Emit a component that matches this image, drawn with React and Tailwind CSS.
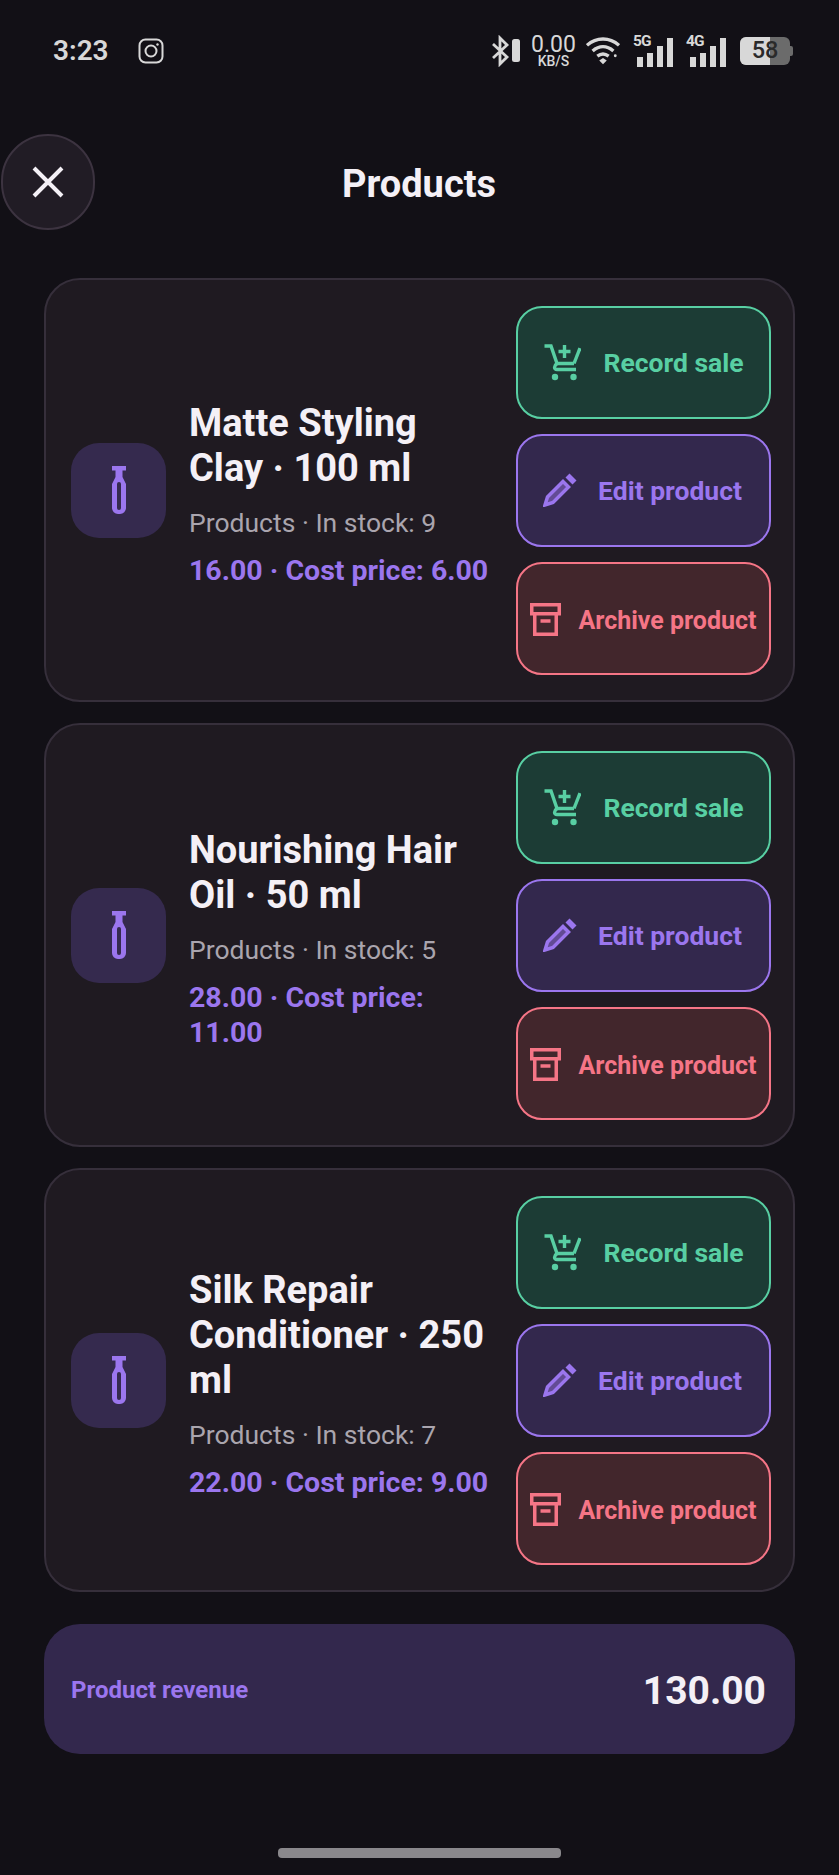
import React from "react";

const ROBOTO = { fontFamily: "Roboto, sans-serif" };

const products = [
  { id: 1, name: "Matte Styling Clay · 100 ml", stock: 9, price: "16.00 · Cost price: 6.00" },
  { id: 2, name: "Nourishing Hair Oil · 50 ml", stock: 5, price: "28.00 · Cost price: 11.00" },
  { id: 3, name: "Silk Repair Conditioner · 250 ml", stock: 7, price: "22.00 · Cost price: 9.00" },
];

const CartIcon = () => (
  <svg width="38" height="38" viewBox="12 8 38 38" fill="none" stroke="currentColor" strokeWidth="3.4">
    <path d="M13.5 11H20l6 17.5h17" />
    <path d="M49 13l-6 15.5" />
    <path d="M26 28.5c-3 2-3.5 6 0 6h19" />
    <path d="M33.5 10v13M27.5 16.5h12" />
    <circle cx="24" cy="42" r="3.2" fill="currentColor" stroke="none" />
    <circle cx="42.5" cy="42" r="3.2" fill="currentColor" stroke="none" />
  </svg>
);

const PenIcon = () => (
  <svg width="34" height="34" viewBox="0 0 34 34" fill="none" stroke="currentColor" strokeWidth="3.5">
    <path d="M2 32l2.5-8L20 8.5l5.5 5.5L10 29.5z" fill="currentColor" fillOpacity="0.45" />
    <path d="M26.5 0.5l7 7-4 4-7-7z" fill="currentColor" stroke="none" />
  </svg>
);

const BoxIcon = () => (
  <svg width="31" height="33" viewBox="0 0 31 33" fill="none" stroke="currentColor" strokeWidth="3.5">
    <path d="M1.75 1.75h27.5v9H1.75z" />
    <path d="M4.75 11v20.25h21.5V11" />
    <path d="M10.5 18h10" />
  </svg>
);

const BottleIcon = () => (
  <svg width="14" height="48" viewBox="0 0 14 48" fill="none">
    <path d="M0 0h14v4.5h-3.5V11l3.5 7v24a6 6 0 0 1-6 6H6a6 6 0 0 1-6-6V18l3.5-7V4.5H0z" fill="#9b76ee" />
    <rect x="5" y="16" width="4" height="28" rx="2" fill="#352a4e" />
  </svg>
);

const Signal = ({ label }) => (
  <div className="relative h-[32px] w-[40px]">
    <span className="absolute left-0 top-[-1px] text-[15.5px] font-bold leading-[14px] tracking-[-1px] text-[#d8d8d8]" style={ROBOTO}>{label}</span>
    <div className="absolute bottom-0 right-0 flex items-end gap-[4px]">
      <div className="h-[10px] w-[6px] bg-[#d8d8d8]" />
      <div className="h-[14px] w-[6px] bg-[#d8d8d8]" />
      <div className="h-[21px] w-[6px] bg-[#d8d8d8]" />
      <div className="h-[29px] w-[6px] bg-[#d8d8d8]" />
    </div>
  </div>
);

const StatusBar = () => (
  <div className="flex h-[100px] items-center justify-between pl-[53px] pr-[46px] pt-[2px] text-[#d8d8d8]" style={ROBOTO}>
    <div className="flex items-center gap-[29px]">
      <span className="text-[28px] font-semibold leading-none">3:23</span>
      <svg width="26" height="26" viewBox="0 0 26 26" fill="none" stroke="currentColor" strokeWidth="2">
        <rect x="1.5" y="1.5" width="23" height="23" rx="6" />
        <circle cx="13" cy="13" r="5.5" />
        <circle cx="19.5" cy="6.5" r="1.2" fill="currentColor" stroke="none" />
      </svg>
    </div>
    <div className="flex items-center">
      <svg width="28" height="32" viewBox="0 0 28 32" fill="none" className="mr-[11px]">
        <path d="M1 9l14 13-7 7V3l7 7L1 23" stroke="currentColor" strokeWidth="2.8" />
        <rect x="20" y="4" width="8" height="23" rx="2.5" fill="currentColor" />
      </svg>
      <div className="mr-[10px] flex w-[45px] flex-col items-center">
        <span className="text-[23px] leading-[18px]">0.00</span>
        <span className="mt-[1px] text-[14px] font-medium leading-[12px]">KB/S</span>
      </div>
      <svg width="34" height="30" viewBox="0 0 36 30" fill="none" stroke="currentColor" strokeWidth="3.6" className="mr-[13px]">
        <path d="M1 9c10-9 24-9 34 0" />
        <path d="M7 15c7-6 15-6 22 0" />
        <path d="M12 20.5c4-3 8-3 12 0" />
        <path d="M14 25l4-2.5 4 2.5-4 4z" fill="currentColor" stroke="none" />
        <circle cx="31" cy="20" r="1.5" fill="currentColor" stroke="none" />
      </svg>
      <div className="mr-[13px]"><Signal label="5G" /></div>
      <div className="mr-[14px]"><Signal label="4G" /></div>
      <div className="relative flex h-[28px] w-[50px] items-center overflow-hidden rounded-[6px] bg-[#6b6b6b]">
        <div className="absolute inset-y-0 left-0 w-[30px] bg-[#d8d8d8]" />
        <span className="relative w-full text-center text-[23.5px] font-medium leading-none text-[#2a2a2a]">58</span>
      </div>
      <div className="h-[10px] w-[3px] rounded-r-[2px] bg-[#6b6b6b]" />
    </div>
  </div>
);

const ActionButton = ({ icon, label, tone, gap }) => (
  <button type="button" className={`flex h-[113px] w-full items-center justify-center rounded-[26px] border-2 font-bold ${tone} ${gap}`}>
    {icon}
    <span className="whitespace-nowrap pt-[2px]">{label}</span>
  </button>
);

const ProductCard = ({ product }) => (
  <div className="flex h-[424px] items-center rounded-[36px] border-2 border-[#362f3b] bg-[#1f1a21] pl-[25px] pr-[22px]">
    <div className="flex h-[95px] w-[95px] shrink-0 items-center justify-center rounded-[28px] bg-[#352a4e]">
      <BottleIcon />
    </div>
    <div className="ml-[23px] w-[309px] shrink-0 pt-[8px]">
      <h2 className="text-[38px] font-bold leading-[45px] text-[#f4f0f6]">{product.name}</h2>
      <p className="mt-[14px] text-[26.5px] leading-[36px] text-[#aaa5ae]">Products · In stock: {product.stock}</p>
      <p className="mt-[12px] text-[28.5px] font-bold leading-[35px] text-[#9b76ee]">{product.price}</p>
    </div>
    <div className="ml-auto flex w-[255px] shrink-0 flex-col gap-[15px]">
      <ActionButton icon={<CartIcon />} label="Record sale" gap="gap-[22px] text-[26.5px]" tone="border-[#58cfa3] bg-[#1c3c35] text-[#58cfa3]" />
      <ActionButton icon={<PenIcon />} label="Edit product" gap="gap-[21px] pr-[2px] text-[26.5px]" tone="border-[#9b76ee] bg-[#33284d] text-[#9b76ee]" />
      <ActionButton icon={<BoxIcon />} label="Archive product" gap="gap-[17px] pt-[3px] text-[25px]" tone="border-[#f57586] bg-[#42262c] text-[#f57586]" />
    </div>
  </div>
);

export default function App() {
  return (
    <div className="flex min-h-[1875px] w-[839px] flex-col bg-[#121016]" style={ROBOTO}>
      <StatusBar />
      <div className="mt-[34px] grid grid-cols-[1fr_auto_1fr] items-center pl-[1px]">
        <button type="button" className="flex h-[96px] w-[94px] items-center justify-center rounded-full border-2 border-[#3c3340] bg-[#211c25] text-[#f4f0f6]">
          <svg width="34" height="34" viewBox="0 0 34 34" fill="none" stroke="currentColor" strokeWidth="4">
            <path d="M3 3l28 28M31 3L3 31" />
          </svg>
        </button>
        <h1 className="mr-[2px] pt-[4px] text-[38px] font-bold leading-none text-[#f4f0f6]">Products</h1>
        <div />
      </div>
      <div className="mt-[48px] flex flex-col gap-[21px] px-[44px]">
        {products.map((p) => (
          <ProductCard key={p.id} product={p} />
        ))}
      </div>
      <div className="mx-[44px] mt-[32px] flex h-[130px] items-center justify-between rounded-[36px] bg-[#33284d] pl-[27px] pr-[29px] pt-[2px]">
        <span className="text-[24px] font-bold text-[#9b76ee]">Product revenue</span>
        <span className="pt-[2px] text-[39px] font-bold text-[#f4f0f6]">130.00</span>
      </div>
      <div className="mx-auto mt-[94px] h-[10px] w-[283px] rounded-[4px] bg-[#8a888c]" />
    </div>
  );
}
